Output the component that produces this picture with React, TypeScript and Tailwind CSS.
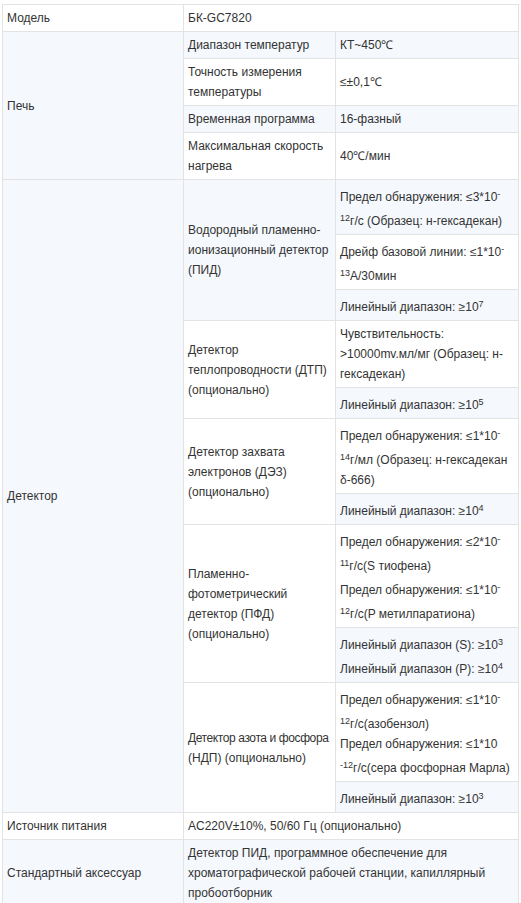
import React from "react";

// preflight keeps sup at line-height 0, so lines holding one get a little extra room on top
const Sup = ({ children }: { children: React.ReactNode }) => <sup className="text-[9px]">{children}</sup>;

const Ln = ({ children, up }: { children: React.ReactNode; up?: boolean }) => (
  <div className={up ? "pt-[4px]" : ""}>{children}</div>
);

const Td = ({
  children,
  rowSpan,
  colSpan,
}: {
  children: React.ReactNode;
  rowSpan?: number;
  colSpan?: number;
}) => (
  <td
    rowSpan={rowSpan}
    colSpan={colSpan}
    className="border border-[#e3e3e3] px-[4px] py-[3px] align-middle"
  >
    {children}
  </td>
);

const row = "even:bg-[#f5f8fd]";

export default function App() {
  return (
    <div
      className="min-h-[903px] bg-white pl-[2px] pt-[4px] text-[12px] leading-[20px] text-[#333]"
      style={{ fontFamily: '"Liberation Sans", Arial, sans-serif' }}
    >
      <table className="w-[516px] table-fixed border-collapse">
        <colgroup>
          <col className="w-[181px]" />
          <col className="w-[152px]" />
          <col className="w-[183px]" />
        </colgroup>
        <tbody>
          <tr className={row}>
            <Td>Модель</Td>
            <Td colSpan={2}>БК-GC7820</Td>
          </tr>
          <tr className={row}>
            <Td rowSpan={4}>Печь</Td>
            <Td>Диапазон температур</Td>
            <Td>КТ~450℃</Td>
          </tr>
          <tr className={row}>
            <Td>Точность измерения температуры</Td>
            <Td>≤±0,1℃</Td>
          </tr>
          <tr className={row}>
            <Td>Временная программа</Td>
            <Td>16-фазный</Td>
          </tr>
          <tr className={row}>
            <Td>Максимальная скорость нагрева</Td>
            <Td>40℃/мин</Td>
          </tr>

          {/* Детектор */}
          <tr className={row}>
            <Td rowSpan={11}>Детектор</Td>
            <Td rowSpan={3}>Водородный пламенно-ионизационный детектор (ПИД)</Td>
            <Td>
              <Ln up>
                Предел обнаружения: ≤3*10<Sup>-</Sup>
              </Ln>
              <Ln up>
                <Sup>12</Sup>г/с (Образец: н-гексадекан)
              </Ln>
            </Td>
          </tr>
          <tr className={row}>
            <Td>
              <Ln up>
                Дрейф базовой линии: ≤1*10<Sup>-</Sup>
              </Ln>
              <Ln up>
                <Sup>13</Sup>А/30мин
              </Ln>
            </Td>
          </tr>
          <tr className={row}>
            <Td>
              <Ln up>
                Линейный диапазон: ≥10<Sup>7</Sup>
              </Ln>
            </Td>
          </tr>
          <tr className={row}>
            <Td rowSpan={2}>Детектор теплопроводности (ДТП) (опционально)</Td>
            <Td>Чувствительность: &gt;10000mv.мл/мг (Образец: н-гексадекан)</Td>
          </tr>
          <tr className={row}>
            <Td>
              <Ln up>
                Линейный диапазон: ≥10<Sup>5</Sup>
              </Ln>
            </Td>
          </tr>
          <tr className={row}>
            <Td rowSpan={2}>Детектор захвата электронов (ДЭЗ) (опционально)</Td>
            <Td>
              <Ln up>
                Предел обнаружения: ≤1*10<Sup>-</Sup>
              </Ln>
              <Ln up>
                <Sup>14</Sup>г/мл (Образец: н-гексадекан
              </Ln>
              <Ln>δ-666)</Ln>
            </Td>
          </tr>
          <tr className={row}>
            <Td>
              <Ln up>
                Линейный диапазон: ≥10<Sup>4</Sup>
              </Ln>
            </Td>
          </tr>
          <tr className={row}>
            <Td rowSpan={2}>Пламенно-фотометрический детектор (ПФД) (опционально)</Td>
            <Td>
              <Ln up>
                Предел обнаружения: ≤2*10<Sup>-</Sup>
              </Ln>
              <Ln up>
                <Sup>11</Sup>г/с(S тиофена)
              </Ln>
              <Ln up>
                Предел обнаружения: ≤1*10<Sup>-</Sup>
              </Ln>
              <Ln up>
                <Sup>12</Sup>г/с(P метилпаратиона)
              </Ln>
            </Td>
          </tr>
          <tr className={row}>
            <Td>
              <Ln up>
                Линейный диапазон (S): ≥10<Sup>3</Sup>
              </Ln>
              <Ln up>
                Линейный диапазон (P): ≥10<Sup>4</Sup>
              </Ln>
            </Td>
          </tr>
          <tr className={row}>
            <Td rowSpan={2}>
              <span className="whitespace-nowrap tracking-[-0.4px]">Детектор азота и фосфора</span>
              <br />
              (НДП) (опционально)
            </Td>
            <Td>
              <Ln up>
                Предел обнаружения: ≤1*10<Sup>-</Sup>
              </Ln>
              <Ln up>
                <Sup>12</Sup>г/с(азобензол)
              </Ln>
              <Ln>Предел обнаружения: ≤1*10</Ln>
              <Ln up>
                <Sup>-12</Sup>г/с(сера фосфорная Марла)
              </Ln>
            </Td>
          </tr>
          <tr className={row}>
            <Td>
              <Ln up>
                Линейный диапазон: ≥10<Sup>3</Sup>
              </Ln>
            </Td>
          </tr>

          <tr className={row}>
            <Td>Источник питания</Td>
            <Td colSpan={2}>AC220V±10%, 50/60 Гц (опционально)</Td>
          </tr>
          <tr className={row}>
            <Td>Стандартный аксессуар</Td>
            <Td colSpan={2}>
              Детектор ПИД, программное обеспечение для хроматографической рабочей станции, капиллярный пробоотборник
            </Td>
          </tr>
        </tbody>
      </table>
    </div>
  );
}
